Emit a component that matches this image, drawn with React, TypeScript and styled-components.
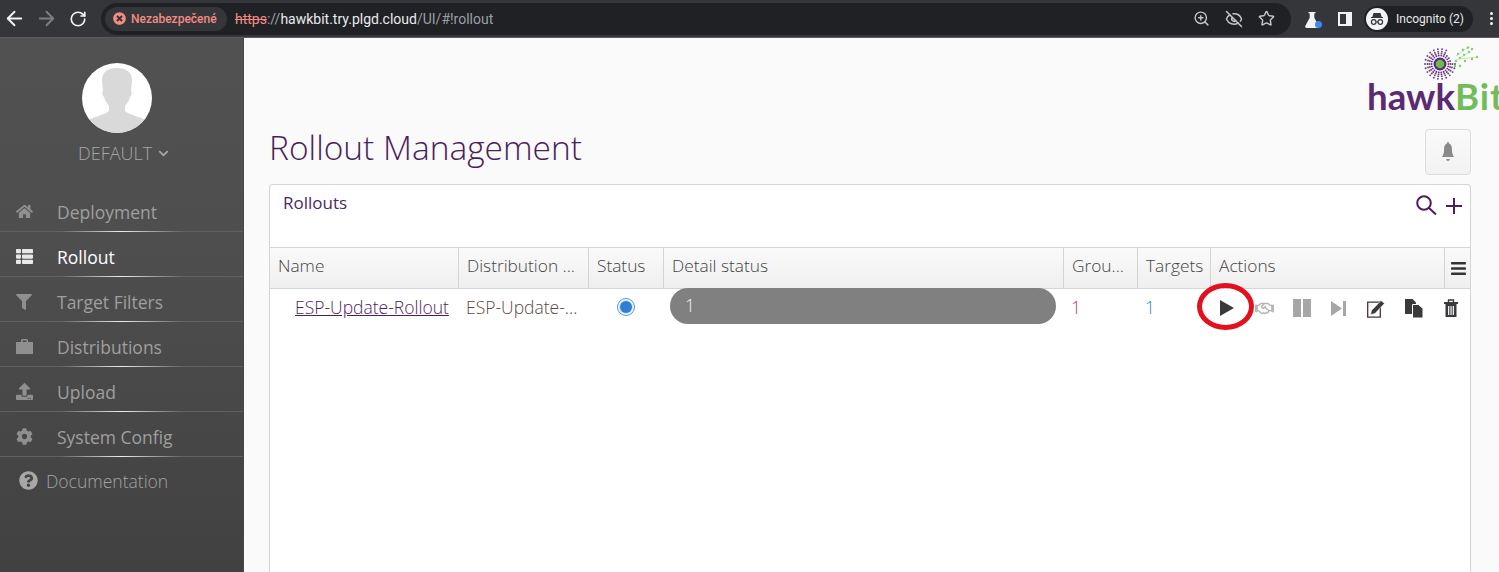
import React from 'react';
import styled, { createGlobalStyle } from 'styled-components';
import { ArrowLeft, ArrowRight, RotateCw, ZoomIn, EyeOff, Star } from 'lucide-react';
import {
  FaHome,
  FaThList,
  FaFilter,
  FaUpload,
  FaCog,
  FaQuestionCircle,
  FaBars,
  FaRegHandshake,
  FaChevronDown,
  FaTimesCircle,
} from 'react-icons/fa';

const GlobalStyle = createGlobalStyle`
  html, body {
    margin: 0;
    padding: 0;
    height: 100%;
    overflow: hidden;
    background: #fafafa;
  }
  * {
    box-sizing: border-box;
  }
`;

const Page = styled.div`
  width: 1499px;
  height: 572px;
  display: flex;
  flex-direction: column;
  overflow: hidden;
  font-family: 'Open Sans', 'Noto Sans', sans-serif;
`;

/* browser chrome */
const Toolbar = styled.div`
  height: 38px;
  flex: none;
  background: #35363a;
  border-bottom: 1px solid #5a5b5e;
  display: flex;
  align-items: center;
  padding-left: 0;
  color: #fff;
`;

const NavGroup = styled.div`
  display: flex;
  margin-left: -2px;
`;

const NavButton = styled.div<{ $dim?: boolean }>`
  width: 32px;
  height: 32px;
  display: flex;
  align-items: center;
  justify-content: center;
  color: ${(p) => (p.$dim ? '#7d7e81' : '#f1f3f4')};
`;

const Omnibox = styled.div`
  margin-left: 7px;
  width: 1190px;
  height: 32px;
  border-radius: 16px;
  background: #202124;
  display: flex;
  align-items: center;
  padding: 0 16px 0 4px;
`;

const SecurityChip = styled.div`
  height: 24px;
  width: 122px;
  padding-left: 8px;
  border-radius: 12px;
  background: #35363a;
  display: flex;
  align-items: center;
  gap: 5px;
  color: #f28b82;
  font-family: 'Roboto', sans-serif;
  font-size: 12px;
  font-weight: 500;
`;

const Url = styled.div`
  margin-left: 8px;
  flex: 1;
  font-family: 'Roboto', sans-serif;
  font-size: 14px;
  color: #9aa0a6;
`;

const Scheme = styled.span`
  color: #f28b82;
  text-decoration: line-through;
`;

const Host = styled.span`
  color: #e8eaed;
`;

const OmniIcons = styled.div`
  display: flex;
  align-items: center;
  gap: 15px;
  color: #c4c7c5;
`;

const ToolIcons = styled.div`
  display: flex;
  align-items: center;
  margin-left: 12px;
  gap: 12px;
`;

const SidePanelIcon = styled.div`
  width: 14px;
  height: 14px;
  margin-left: 5px;
  border: 2px solid #f1f3f4;
  border-right-width: 6px;
`;

const FlaskWrap = styled.div`
  position: relative;
  width: 18px;
  height: 18px;
  padding: 1px 0 0 2px;
  color: #f1f3f4;
`;

const FlaskDot = styled.span`
  position: absolute;
  right: -1px;
  bottom: 0;
  width: 7px;
  height: 7px;
  border-radius: 50%;
  background: #4285f4;
`;

const IncognitoChip = styled.div`
  width: 109px;
  height: 26px;
  border-radius: 13px;
  background: #202124;
  display: flex;
  align-items: center;
  gap: 8px;
  padding-left: 2px;
  font-family: 'Roboto', sans-serif;
  font-size: 12px;
  color: #e8eaed;
`;

const IncognitoBadge = styled.div`
  width: 22px;
  height: 22px;
  border-radius: 50%;
  background: #f1f3f4;
  display: flex;
  align-items: center;
  justify-content: center;
`;

const Dots = styled.div`
  margin-left: 17px;
  display: flex;
  flex-direction: column;
  gap: 2px;
`;

const Dot = styled.span`
  width: 3px;
  height: 3px;
  border-radius: 50%;
  background: #f1f3f4;
`;

/* application */
const Body = styled.div`
  flex: 1;
  min-height: 0;
  display: flex;
`;

const Sidebar = styled.aside`
  width: 244px;
  flex: none;
  background: linear-gradient(180deg, #515151 0%, #4e4e4e 40%, #414141 100%);
  border-right: 1px solid #474747;
  display: flex;
  flex-direction: column;
  padding-top: 25px;
`;

const Avatar = styled.div`
  width: 70px;
  height: 70px;
  border-radius: 50%;
  background: #fff;
  overflow: hidden;
  margin-left: 82px;
`;

const UserName = styled.div`
  margin-top: 7px;
  height: 26px;
  padding-left: 78px;
  display: flex;
  align-items: center;
  gap: 6px;
  font-size: 18px;
  font-weight: 300;
  color: #a6a6a6;
`;

const Menu = styled.nav`
  margin-top: 21px;
  display: flex;
  flex-direction: column;
`;

const MenuRow = styled.div<{ $active?: boolean }>`
  position: relative;
  height: 45px;
  display: flex;
  align-items: center;
  padding-left: 16px;
  padding-top: 4px;
  font-size: 17.5px;
  color: ${(p) => (p.$active ? '#ffffff' : '#9f9f9f')};

  &::after {
    content: '';
    position: absolute;
    left: 0;
    right: 0;
    bottom: 0;
    height: 1px;
    background: linear-gradient(90deg, #606060 0%, #626262 25%, #ededed 50%, #626262 75%, #606060 100%);
  }
`;

const MenuIcon = styled.span<{ $active?: boolean }>`
  width: 41px;
  display: flex;
  align-items: center;
  color: ${(p) => (p.$active ? '#e8e8e8' : '#8f8f8f')};
`;

const DocRow = styled.div`
  height: 45px;
  display: flex;
  align-items: center;
  gap: 8px;
  padding-left: 19px;
  padding-top: 2px;
  font-size: 17.5px;
  font-weight: 300;
  color: #a3a3a3;
`;

const Main = styled.main`
  flex: 1;
  min-width: 0;
  background: #fafafa;
  display: flex;
  flex-direction: column;
  padding-left: 25px;
  padding-right: 28px;
  overflow: hidden;
`;

const LogoRow = styled.div`
  height: 75px;
  margin-right: -28px;
  display: flex;
  justify-content: flex-end;
  overflow: hidden;
`;

const Logo = styled.div`
  width: 131px;
  flex: none;
  position: relative;
  overflow: hidden;
`;

const LogoMark = styled.svg`
  position: absolute;
  left: 54px;
  top: 8px;
`;

const LogoText = styled.div`
  position: absolute;
  left: -1px;
  top: 33px;
  font-family: 'Lato', sans-serif;
  font-size: 36.600px;
  line-height: 50px;
  font-weight: 700;
  white-space: nowrap;
  color: #5a2a73;
`;

const LogoGreen = styled.span`
  color: #72bd5b;
  letter-spacing: 1px;
`;

const TitleRow = styled.div`
  height: 71px;
  display: flex;
  align-items: center;
  justify-content: space-between;
`;

const Title = styled.h1`
  margin: 0 0 4px;
  font-size: 33.5px;
  font-weight: 300;
  color: #4b1e5c;
`;

const BellButton = styled.button`
  width: 46px;
  height: 46px;
  margin-top: 6px;
  padding: 0;
  border: 1px solid #dcdcdc;
  border-radius: 4px;
  background: linear-gradient(180deg, #fafafa, #f2f2f2);
  color: #8a8a8a;
  display: flex;
  align-items: center;
  justify-content: center;
`;

const Panel = styled.section`
  flex: 1;
  background: #fff;
  border: 1px solid #d4d4d4;
  border-bottom: 0;
  border-radius: 4px 4px 0 0;
  display: flex;
  flex-direction: column;
`;

const PanelHead = styled.div`
  height: 62px;
  display: flex;
  justify-content: space-between;
  padding: 6px 8px 0 13px;
  font-size: 17px;
  color: #4b2a5c;
`;

const PanelTools = styled.div`
  display: flex;
  align-items: flex-start;
  gap: 9px;
  padding-top: 4px;
  color: #4b1e5c;
`;

const PlusIcon = styled.svg`
  margin-top: 3px;
`;

const TableGrid = styled.div`
  display: grid;
  grid-template-columns: 189px 130px 75px 400px 74px 73px 234px 25px;
`;

const HeadCell = styled.div`
  height: 42px;
  display: flex;
  align-items: center;
  padding: 0 0 6px 8px;
  border-top: 1px solid #d4d4d4;
  border-bottom: 1px solid #d4d4d4;
  border-right: 1px solid #d4d4d4;
  background: linear-gradient(180deg, #fafafa, #efefef);
  font-size: 17.300px;
  font-weight: 300;
  color: #444;
  white-space: nowrap;
  overflow: hidden;
`;

const MenuHeadCell = styled(HeadCell)`
  border-right: 0;
  padding: 0 0 0 5px;
  color: #333;
`;

const Cell = styled.div<{ $color?: string; $center?: boolean }>`
  height: 36px;
  display: flex;
  align-items: center;
  justify-content: ${(p) => (p.$center ? 'center' : 'flex-start')};
  padding-left: ${(p) => (p.$center ? '0' : '7px')};
  font-size: 17.500px;
  font-weight: 300;
  color: ${(p) => p.$color || '#444'};
  white-space: nowrap;
`;

const NameLink = styled.a`
  margin-left: 18px;
  color: #4b1e5c;
  text-decoration: underline;
`;

const StatusRing = styled.span`
  width: 18px;
  height: 18px;
  margin-left: -2px;
  margin-bottom: 1px;
  border-radius: 50%;
  border: 1.500px solid #4a96dc;
  padding: 2px;
  display: flex;

  &::before {
    content: '';
    flex: 1;
    border-radius: 50%;
    background: #2f7fd0;
    box-shadow: 0 0 0 1px #cfe3f7;
  }
`;

const Progress = styled.div`
  width: 386px;
  height: 36px;
  margin-left: -1px;
  margin-bottom: 2px;
  padding-left: 15px;
  padding-bottom: 3px;
  border-radius: 18px;
  background: #808080;
  color: #e6f6ff;
  font-size: 17.500px;
  display: flex;
  align-items: center;
`;

const ActionsCell = styled.div`
  grid-column: span 2;
  position: relative;
  height: 38px;
  display: flex;
  align-items: center;
  margin-left: -3px;
`;

const ActionSlot = styled.span<{ $tone?: string }>`
  width: 37.500px;
  display: flex;
  justify-content: center;
  color: ${(p) => p.$tone || '#3a3a3a'};
`;

const RedCircle = styled.span`
  position: absolute;
  left: -11px;
  top: -6px;
  width: 57px;
  height: 47px;
  border: 5px solid #e3101d;
  border-radius: 50%;
`;

const columns = ['Name', 'Distribution ...', 'Status', 'Detail status', 'Grou...', 'Targets', 'Actions'];

const SuitcaseIcon = () => (
  <svg width="17" height="15" viewBox="0 0 17 15" fill="currentColor">
    <path d="M5 3V1.500C5 .7 5.600 0 6.500 0h4c.9 0 1.500 .7 1.500 1.500V3h5v12H0V3zm1.500 0h4V1.500h-4z" />
  </svg>
);

const menuItems = [
  { label: 'Deployment', icon: <FaHome size={17} /> },
  { label: 'Rollout', icon: <FaThList size={17} />, active: true },
  { label: 'Target Filters', icon: <FaFilter size={16} /> },
  { label: 'Distributions', icon: <SuitcaseIcon /> },
  { label: 'Upload', icon: <FaUpload size={17} /> },
  { label: 'System Config', icon: <FaCog size={17} /> },
];

// spokes of dots round the hawkBit eye, open towards the green branches
const logoDots = Array.from({ length: 22 }).flatMap((_, s) => {
  const a = (s / 22) * Math.PI * 2;
  const deg = (s / 22) * 360;
  return [8.5, 10.500, 12.500, 15]
    .filter((r) => !(r > 11 && deg > 295 && deg < 360))
    .map((r) => ({ x: 18 + r * Math.cos(a), y: 18 + r * Math.sin(a), r: 0.95 }));
});

const branchDots = [
  [34, 15],
  [38, 12],
  [42, 9],
  [47, 6],
  [43, 15],
  [50, 13],
  [55, 11],
  [36, 8],
  [41, 4],
  [46, 1.500],
  [33, 20],
  [38, 20],
  [50, 3],
];

const App: React.FC = () => {
  return (
    <>
      <GlobalStyle />
      <Page>
        <Toolbar>
          <NavGroup>
            <NavButton>
              <ArrowLeft size={23} strokeWidth={2} />
            </NavButton>
            <NavButton $dim>
              <ArrowRight size={23} strokeWidth={2} />
            </NavButton>
            <NavButton>
              <RotateCw size={18} strokeWidth={2.2} />
            </NavButton>
          </NavGroup>
          <Omnibox>
            <SecurityChip>
              <FaTimesCircle size={13} />
              Nezabezpečené
            </SecurityChip>
            <Url>
              <Scheme>https</Scheme>://<Host>hawkbit.try.plgd.cloud</Host>/UI/#!rollout
            </Url>
            <OmniIcons>
              <ZoomIn size={17} />
              <EyeOff size={18} />
              <Star size={17} />
            </OmniIcons>
          </Omnibox>
          <ToolIcons>
            <FlaskWrap>
              <svg width="14" height="16" viewBox="0 0 14 16" fill="currentColor">
                <path d="M3.500 0h7v1.300H9.300v4.500l4.300 8c.5 1 0 2.200-1.200 2.200H1.600C.4 16-.1 14.800 .4 13.800l4.300-8V1.300H3.500z" />
              </svg>
              <FlaskDot />
            </FlaskWrap>
            <SidePanelIcon />
            <IncognitoChip>
              <IncognitoBadge>
                <svg width="18" height="18" viewBox="0 0 18 18" fill="none">
                  <path d="M5.500 3h7l1.200 4H15v1H3V7h1.300z" fill="#35363a" />
                  <circle cx="5.700" cy="12" r="2.300" stroke="#35363a" strokeWidth="1.200" />
                  <circle cx="12.300" cy="12" r="2.300" stroke="#35363a" strokeWidth="1.200" />
                  <path d="M8 12h2" stroke="#35363a" strokeWidth="1.200" />
                </svg>
              </IncognitoBadge>
              Incognito (2)
            </IncognitoChip>
          </ToolIcons>
          <Dots>
            <Dot />
            <Dot />
            <Dot />
          </Dots>
        </Toolbar>
        <Body>
          <Sidebar>
            <Avatar>
              <svg width="70" height="70" viewBox="0 0 70 70">
                <path
                  d="M35 5c-9 0-15 4-15 12 0 4 1 8 1 11-1 1-1 4 1 6 1 4 3 6 5 9v5c-4 4-18 6-27 13v14h70V61c-9-7-23-9-27-13v-5c2-3 4-5 5-9 2-2 2-5 1-6 0-3 1-7 1-11 0-8-6-12-15-12z"
                  fill="#d9d9d9"
                />
              </svg>
            </Avatar>
            <UserName>
              DEFAULT <FaChevronDown size={11} />
            </UserName>
            <Menu>
              {menuItems.map((item) => (
                <MenuRow key={item.label} $active={item.active}>
                  <MenuIcon $active={item.active}>{item.icon}</MenuIcon>
                  {item.label}
                </MenuRow>
              ))}
              <DocRow>
                <FaQuestionCircle size={19} color="#a8a8a8" />
                Documentation
              </DocRow>
            </Menu>
          </Sidebar>
          <Main>
            <LogoRow>
              <Logo>
                <LogoMark width="60" height="36" viewBox="0 0 60 36">
                  {logoDots.map((d, i) => (
                    <circle key={i} cx={d.x} cy={d.y} r={d.r} fill="#6b3a86" />
                  ))}
                  <circle cx="18" cy="18" r="6.500" fill="#5a2a73" />
                  <circle cx="18" cy="18" r="4.300" fill="#6cbb52" />
                  {branchDots.map(([x, y], i) => (
                    <circle key={i} cx={x} cy={y} r="1.200" fill="#7fcb6a" />
                  ))}
                  <path d="M32 16 L47 6 M38 13 L55 11 M34 10 L46 1.500" stroke="#a9dc9a" strokeWidth="0.700" fill="none" />
                </LogoMark>
                <LogoText>
                  hawk<LogoGreen>Bit</LogoGreen>
                </LogoText>
              </Logo>
            </LogoRow>
            <TitleRow>
              <Title>Rollout Management</Title>
              <BellButton>
                <svg width="14" height="20" viewBox="0 0 16 20" fill="currentColor" preserveAspectRatio="none">
                  <path d="M8 0c.8 0 1.200 .6 1.200 1.500C11.500 2.200 12.500 4 12.500 7c0 4 .8 6 2.500 8H1c1.700-2 2.500-4 2.500-8 0-3 1-4.800 3.300-5.500C6.800 .6 7.200 0 8 0zM6 17h4c0 1.200-.9 2-2 2s-2-.8-2-2z" />
                </svg>
              </BellButton>
            </TitleRow>
            <Panel>
              <PanelHead>
                Rollouts
                <PanelTools>
                  <svg width="21" height="20" viewBox="0 0 21 20" fill="none" stroke="currentColor" strokeWidth="2">
                    <circle cx="8" cy="8" r="6.800" />
                    <path d="M13 13l7 6.500" />
                  </svg>
                  <PlusIcon width="16" height="16" viewBox="0 0 16 16" fill="currentColor">
                    <path d="M7 0h2v7h7v2H9v7H7V9H0V7h7z" />
                  </PlusIcon>
                </PanelTools>
              </PanelHead>
              <TableGrid>
                {columns.map((c) => (
                  <HeadCell key={c}>{c}</HeadCell>
                ))}
                <MenuHeadCell>
                  <FaBars size={17} />
                </MenuHeadCell>
                <Cell>
                  <NameLink>ESP-Update-Rollout</NameLink>
                </Cell>
                <Cell $color="#5b4a3f">ESP-Update-...</Cell>
                <Cell $center>
                  <StatusRing />
                </Cell>
                <Cell>
                  <Progress>1</Progress>
                </Cell>
                <Cell $color="#9c3f86">
                  <span>1</span>
                </Cell>
                <Cell $color="#2f86c6">
                  <span>1</span>
                </Cell>
                <ActionsCell>
                  <ActionSlot>
                    <svg width="14" height="16" viewBox="0 0 14 16" fill="currentColor">
                      <path d="M0 0l14 8-14 8z" />
                    </svg>
                  </ActionSlot>
                  <ActionSlot $tone="#b5b5b5">
                    <FaRegHandshake size={19} />
                  </ActionSlot>
                  <ActionSlot $tone="#a6a6a6">
                    <svg width="18" height="18" viewBox="0 0 18 18" fill="currentColor">
                      <path d="M0 0h8v18H0zM10 0h8v18h-8z" />
                    </svg>
                  </ActionSlot>
                  <ActionSlot $tone="#a6a6a6">
                    <svg width="15" height="15" viewBox="0 0 15 15" fill="currentColor">
                      <path d="M0 0l11 7.500L0 15zM12 0h3v15h-3z" />
                    </svg>
                  </ActionSlot>
                  <ActionSlot>
                    <svg width="18" height="19" viewBox="0 0 18 19">
                      <path d="M.7 3.200h12.600v15H.7z" fill="none" stroke="#4a3040" strokeWidth="1.300" />
                      <path d="M4.500 11.500L14 1.500 17.500 4.500 8 14.500l-4.500 1.200z" fill="#3a3a3a" stroke="#fff" strokeWidth=".6" />
                    </svg>
                  </ActionSlot>
                  <ActionSlot>
                    <svg width="18" height="19" viewBox="0 0 18 19">
                      <path d="M0 0h7.500L11 3.500V15H0z" fill="currentColor" />
                      <path d="M7.500 5.500h6L18 9.500V19H7.500z" fill="currentColor" stroke="#fff" strokeWidth="1" />
                    </svg>
                  </ActionSlot>
                  <ActionSlot>
                    <svg width="14" height="18" viewBox="0 0 14 18">
                      <path d="M4.500 3V1h5v2" fill="none" stroke="currentColor" strokeWidth="1.400" />
                      <path d="M0 3h14v2H0z" fill="currentColor" />
                      <path d="M1.500 5h11v13h-11z" fill="currentColor" />
                      <path d="M4 7h1.300v9H4zM6.400 7h1.300v9H6.400zM8.700 7H10v9H8.700z" fill="#e8eef4" />
                    </svg>
                  </ActionSlot>
                  <RedCircle />
                </ActionsCell>
              </TableGrid>
            </Panel>
          </Main>
        </Body>
      </Page>
    </>
  );
};

export default App;
